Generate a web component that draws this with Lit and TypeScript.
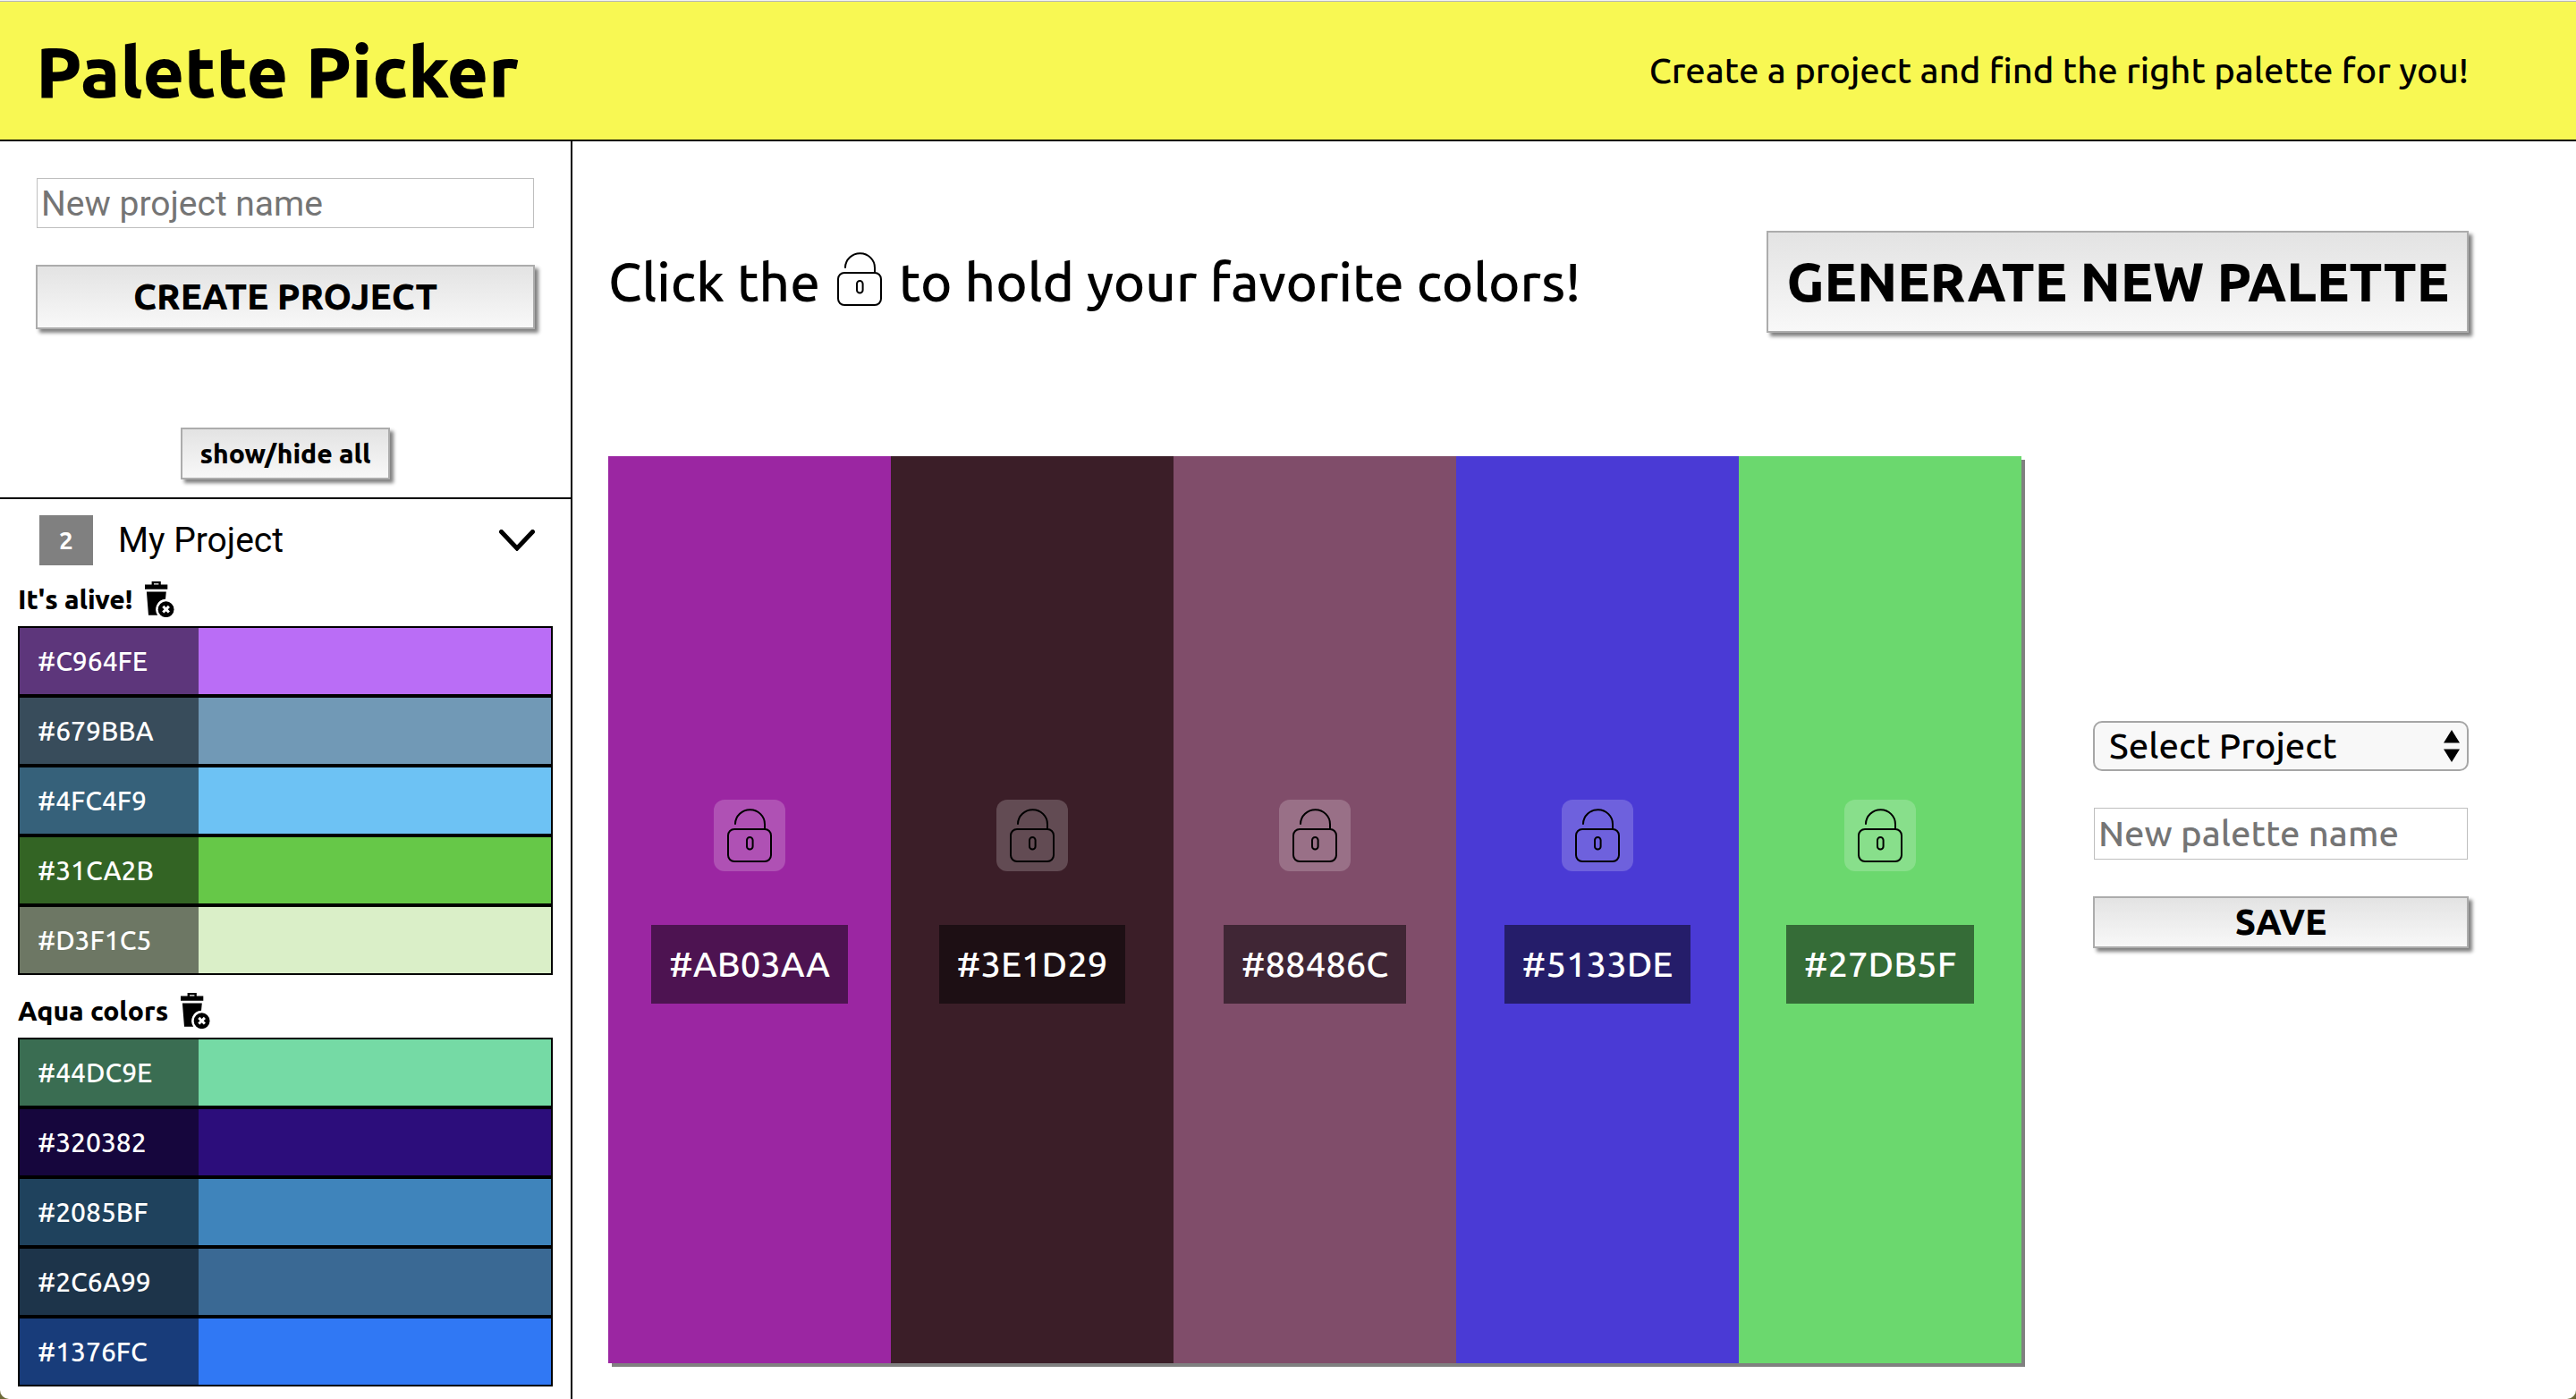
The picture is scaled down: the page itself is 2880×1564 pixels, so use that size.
import { LitElement, html, css, svg } from "lit";
import { customElement, property, state } from "lit/decorators.js";

interface Swatch {
  hex: string;
  fill: string;
}

interface Palette {
  name: string;
  swatches: Swatch[];
}

const savedPalettes: Palette[] = [
  {
    name: "It's alive!",
    swatches: [
      { hex: "#C964FE", fill: "#ba6df6" },
      { hex: "#679BBA", fill: "#7199b6" },
      { hex: "#4FC4F9", fill: "#6dc2f4" },
      { hex: "#31CA2B", fill: "#66c848" },
      { hex: "#D3F1C5", fill: "#daefc8" },
    ],
  },
  {
    name: "Aqua colors",
    swatches: [
      { hex: "#44DC9E", fill: "#75daa5" },
      { hex: "#320382", fill: "#2c0d7b" },
      { hex: "#2085BF", fill: "#3f84bb" },
      { hex: "#2C6A99", fill: "#3a6994" },
      { hex: "#1376FC", fill: "#3078f4" },
    ],
  },
];

const currentPalette: Swatch[] = [
  { hex: "#AB03AA", fill: "#9b26a2" },
  { hex: "#3E1D29", fill: "#3b1e28" },
  { hex: "#88486C", fill: "#804d6a" },
  { hex: "#5133DE", fill: "#4a3ad5" },
  { hex: "#27DB5F", fill: "#6bd86e" },
];

const lockShape = svg`
  <g fill="none" stroke="#000" stroke-width="2" stroke-linecap="round">
    <rect x="6" y="23" width="48" height="36" rx="7" />
    <path d="M14 17A16.5 16 0 0 1 47 17.5V23" />
    <rect x="27" y="32" width="6.6" height="13.6" rx="3.3" />
  </g>`;

const shared = css`
  * {
    box-sizing: border-box;
  }
  h1,
  h2,
  p,
  ul {
    margin: 0;
    padding: 0;
  }
  svg {
    display: block;
    flex: none;
  }
  button {
    font-family: inherit;
    color: #000;
    cursor: pointer;
  }
  .push {
    border: 2px solid #acacac;
    background: linear-gradient(#e3e3e3, #f8f8f8);
    box-shadow: 4px 4px 4px #808080;
    font-weight: 800;
    padding: 3px 20px;
  }
  .field {
    display: block;
    width: calc(100% - 2px);
    margin: 1px;
    border: 1px solid #bfbfbf;
    border-radius: 0;
    background: #fff;
    color: #000;
    outline: none;
  }
  .field::placeholder {
    color: #757575;
    opacity: 1;
  }
`;

@customElement("saved-palette")
class SavedPalette extends LitElement {
  @property({ attribute: false }) palette!: Palette;

  static styles = [
    shared,
    css`
      :host {
        display: block;
      }
      .heading {
        display: flex;
        align-items: center;
        gap: 14px;
        height: 40px;
        margin-bottom: 10px;
      }
      .name {
        font-size: 30px;
        font-weight: 800;
        line-height: 40px;
      }
      .trash {
        border: 0;
        padding: 0;
        background: none;
      }
      .row {
        display: flex;
        list-style: none;
        border: 2px solid #000;
        height: 78px;
      }
      .hex {
        width: 200px;
        padding-left: 20px;
        background: rgba(0, 0, 0, 0.5);
        color: #fff;
        font-size: 30px;
        font-weight: 500;
        line-height: 74px;
      }
    `,
  ];

  render() {
    return html`
      <div class="heading">
        <h2 class="name">${this.palette.name}</h2>
        <button class="trash" aria-label="Delete palette">
          <svg width="33" height="40" viewBox="0 0 33 40">
            <path d="M7.6 0h10.2v3.4h7.5v5.4H0V3.4h7.6zM10 2.2v1.3h5.4V2.2z" fill-rule="evenodd" />
            <path d="M1.9 11.4h21.9l-.8 8.4a11.4 11.4 0 0 0-8.8 17.9H4z" />
            <circle cx="23.6" cy="31.2" r="8.9" />
            <path d="M20.3 27.9l6.6 6.6m0-6.6l-6.6 6.6" stroke="#fff" stroke-width="3" />
          </svg>
        </button>
      </div>
      <ul>
        ${this.palette.swatches.map(
          (s) => html`<li class="row" style="background-color: ${s.fill}">
            <span class="hex">${s.hex}</span>
          </li>`
        )}
      </ul>
    `;
  }
}

@customElement("palette-column")
class PaletteColumn extends LitElement {
  @property({ attribute: false }) swatch!: Swatch;

  static styles = [
    shared,
    css`
      :host {
        display: flex;
        flex: 1;
      }
      .column {
        flex: 1;
        display: flex;
        flex-direction: column;
        align-items: center;
        justify-content: center;
        gap: 60px;
        padding-bottom: 18px;
      }
      .lock {
        border: 0;
        border-radius: 12px;
        padding: 10px;
        background: rgba(255, 255, 255, 0.2);
      }
      .hex {
        padding: 20px;
        background: rgba(0, 0, 0, 0.5);
        color: #fff;
        font-size: 40px;
        line-height: 48px;
        font-weight: 500;
      }
    `,
  ];

  render() {
    return html`
      <div class="column" style="background-color: ${this.swatch.fill}">
        <button class="lock" aria-label="Hold color">
          <svg width="60" height="60" viewBox="0 0 60 60">${lockShape}</svg>
        </button>
        <span class="hex">${this.swatch.hex}</span>
      </div>
    `;
  }
}

@customElement("app-root")
class AppRoot extends LitElement {
  @state() private open = true;

  static styles = [
    shared,
    css`
      :host {
        display: flex;
        min-height: 100vh;
        background: #6d6a38;
        color: #000;
        font-family: Ubuntu, "Noto Sans", sans-serif;
        font-weight: 460;
      }
      .page {
        flex: 1;
        display: flex;
        flex-direction: column;
        background: #fff;
        border-top: 1px solid #f2f2f2;
        border-radius: 0 0 10px 10px;
        overflow: hidden;
      }
      .header {
        display: flex;
        align-items: center;
        justify-content: space-between;
        height: 157px;
        padding: 0 120px 0 40px;
        border-top: 1px solid #b6b6b6;
        border-bottom: 2px solid #000;
        background: #f8f853;
      }
      .title {
        font-size: 80px;
        line-height: 92px;
        font-weight: 800;
      }
      .tagline {
        font-size: 40px;
        line-height: 48px;
      }
      .body {
        flex: 1;
        display: flex;
      }
      .sidebar {
        flex: none;
        width: 640px;
        border-right: 2px solid #000;
      }
      .create {
        display: flex;
        flex-direction: column;
        gap: 40px;
        padding: 40px 40px 0;
      }
      .project-field {
        height: 56px;
        padding: 2px 4px 0;
        font: 39px Roboto, "Liberation Sans", sans-serif;
      }
      .create-button {
        font-size: 40px;
        line-height: 48px;
        padding: 10px 20px;
      }
      .toggle {
        display: flex;
        justify-content: center;
        margin-top: 110px;
        padding-bottom: 20px;
        border-bottom: 2px solid #000;
      }
      .toggle-button {
        font-size: 30px;
        line-height: 38px;
        padding: 8px 20px;
      }
      .project {
        display: flex;
        align-items: center;
        width: 100%;
        padding: 18px 40px 18px 44px;
        border: 0;
        background: none;
        text-align: left;
      }
      .count {
        width: 60px;
        background: #808080;
        color: #fff;
        font-size: 28px;
        line-height: 56px;
        font-weight: 700;
        text-align: center;
      }
      .project-name {
        flex: 1;
        margin-left: 28px;
        font: 39px/56px Roboto, "Liberation Sans", sans-serif;
      }
      .palettes {
        display: flex;
        flex-direction: column;
        gap: 20px;
        padding: 0 20px 14px;
      }
      .main {
        flex: 1;
        display: flex;
        flex-direction: column;
        padding: 100px 120px 40px 40px;
      }
      .intro {
        display: flex;
        align-items: center;
        justify-content: space-between;
        margin-bottom: 138px;
      }
      .hint {
        display: flex;
        align-items: center;
        gap: 14px;
        font-size: 60px;
        line-height: 70px;
      }
      .hint-lock {
        margin-bottom: 6px;
      }
      .generate {
        font-size: 60px;
        line-height: 70px;
        padding: 20px;
      }
      .work {
        flex: 1;
        display: flex;
        gap: 80px;
      }
      .columns {
        flex: 1;
        display: flex;
        box-shadow: 4px 4px 0 #808080;
      }
      .save-form {
        flex: none;
        width: 420px;
        display: flex;
        flex-direction: column;
        justify-content: center;
        gap: 40px;
        padding-bottom: 168px;
      }
      .select-wrap {
        position: relative;
      }
      .select {
        display: block;
        appearance: none;
        width: 100%;
        height: 56px;
        padding: 0 40px 2px 16px;
        border: 2px solid #a6a6a6;
        border-radius: 10px;
        background: #f8f8f8;
        color: #000;
        font-family: inherit;
        font-weight: inherit;
        font-size: 40px;
      }
      .arrows {
        position: absolute;
        right: 10px;
        top: 10px;
        pointer-events: none;
      }
      .palette-field {
        height: 58px;
        padding: 0 4px 2px;
        font-family: inherit;
        font-weight: inherit;
        font-size: 40px;
      }
      .save {
        font-size: 40px;
        line-height: 48px;
      }
    `,
  ];

  render() {
    return html`
      <div class="page">
        <header class="header">
          <h1 class="title">Palette Picker</h1>
          <p class="tagline">Create a project and find the right palette for you!</p>
        </header>
        <div class="body">
          <aside class="sidebar">
            <form class="create" @submit=${(e: Event) => e.preventDefault()}>
              <input class="field project-field" aria-label="New project name" placeholder="New project name" />
              <button class="push create-button">CREATE PROJECT</button>
            </form>
            <div class="toggle">
              <button class="push toggle-button" @click=${this.toggle}>show/hide all</button>
            </div>
            <button class="project" aria-expanded=${this.open} @click=${this.toggle}>
              <span class="count">2</span>
              <span class="project-name">My Project</span>
              <svg width="40" height="24" viewBox="0 0 40 24">
                <path d="M2.5 2.5L20 21L37.5 2.5" fill="none" stroke="#000" stroke-width="5" stroke-linecap="round" />
              </svg>
            </button>
            ${this.open
              ? html`<div class="palettes">
                  ${savedPalettes.map((p) => html`<saved-palette .palette=${p}></saved-palette>`)}
                </div>`
              : null}
          </aside>
          <main class="main">
            <div class="intro">
              <p class="hint">
                <span>Click the</span>
                <svg class="hint-lock" width="60" height="60" viewBox="0 0 60 60">${lockShape}</svg>
                <span>to hold your favorite colors!</span>
              </p>
              <button class="push generate">GENERATE NEW PALETTE</button>
            </div>
            <div class="work">
              <div class="columns">
                ${currentPalette.map((s) => html`<palette-column .swatch=${s}></palette-column>`)}
              </div>
              <form class="save-form" @submit=${(e: Event) => e.preventDefault()}>
                <div class="select-wrap">
                  <select class="select" aria-label="Select Project">
                    <option>Select Project</option>
                  </select>
                  <svg class="arrows" width="18" height="36" viewBox="0 0 18 36">
                    <path d="M9 0L18 14.5H0zM9 36L18 21.5H0z" />
                  </svg>
                </div>
                <input class="field palette-field" aria-label="New palette name" placeholder="New palette name" />
                <button class="push save">SAVE</button>
              </form>
            </div>
          </main>
        </div>
      </div>
    `;
  }

  private toggle() {
    this.open = !this.open;
  }
}
